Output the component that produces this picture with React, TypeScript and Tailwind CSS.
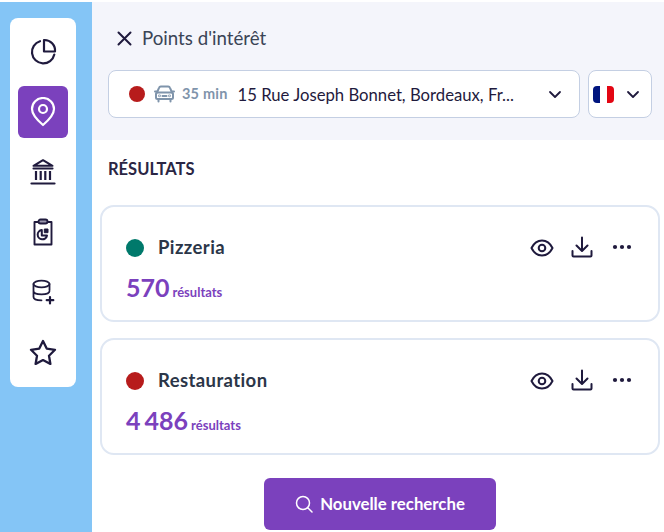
import React from "react";

const ink = "#1f1a3d";

function Nav({ active, children }: { active?: boolean; children: React.ReactNode }) {
  return (
    <div className={active ? "flex h-[52px] w-[50px] items-center justify-center rounded-[6px] bg-[#7b41bd] text-white" : "flex h-[52px] w-[50px] items-center justify-center text-[#1f1a3d]"}>
      {children}
    </div>
  );
}

function Chevron() {
  return (
    <svg width="14" height="9" viewBox="0 0 14 9" fill="none" stroke={ink} strokeWidth="1.800" strokeLinecap="round" strokeLinejoin="round">
      <path d="M2 2l5 5 5-5" />
    </svg>
  );
}

function Actions() {
  return (
    <div className="flex items-center text-[#1f1a3d]">
      <svg width="24" height="18" viewBox="0 0 24 18" fill="none" stroke="currentColor" strokeWidth="2" strokeLinejoin="round">
        <path d="M1.500 9C3.800 4.400 7.500 1.500 12 1.500S20.200 4.400 22.500 9c-2.300 4.600-6 7.500-10.500 7.500S3.800 13.600 1.500 9z" />
        <circle cx="12" cy="9" r="3.300" />
      </svg>
      <svg className="ml-[17px] -translate-y-px" width="22" height="22" viewBox="0 0 22 22" fill="none" stroke="currentColor" strokeWidth="2" strokeLinecap="round" strokeLinejoin="round">
        <path d="M11 1.500v13M5.500 9.500l5.500 5.500 5.500-5.500M1.500 15v4.500a1 1 0 0 0 1 1h17a1 1 0 0 0 1-1V15" />
      </svg>
      <svg className="ml-[19px] -translate-y-px" width="20" height="6" viewBox="0 0 20 6" fill="currentColor">
        <circle cx="3" cy="3" r="2.100" />
        <circle cx="10" cy="3" r="2.100" />
        <circle cx="17" cy="3" r="2.100" />
      </svg>
    </div>
  );
}

function Card({ color, name, count }: { color: string; name: string; count: string }) {
  return (
    <div className="h-[117px] w-[560px] rounded-[14px] border-2 border-[#dfe7f3] bg-white pl-[24px] pr-[26px] pt-[21px]">
      <div className="flex h-[40px] items-center justify-between">
        <div className="flex items-center">
          <span className="h-[18px] w-[18px] rounded-full" style={{ background: color }} />
          <span className="ml-[14px] text-[18.500px] font-bold tracking-[0.4px] text-[#2b3648]">{name}</span>
        </div>
        <Actions />
      </div>
      <div className="mt-[3px] flex items-baseline text-[#7b41bd]">
        <span className="text-[25px] font-bold leading-[32px] [word-spacing:-2px]">{count}</span>
        <span className="ml-[3px] text-[13px] font-bold">résultats</span>
      </div>
    </div>
  );
}

export default function App() {
  return (
    <div className="h-[532px] w-[664px] overflow-hidden bg-white pt-[2px] font-['Lato','Noto_Sans',sans-serif]">
      <div className="flex h-[530px] bg-[#84c5f6]">
        <div className="w-[92px] shrink-0 pl-[10px] pt-[16px]">
          <div className="flex h-[369px] w-[66px] flex-col items-center gap-[8px] rounded-[8px] bg-white pt-[8px]">
            <Nav>
              <svg width="28" height="28" viewBox="0 0 28 28" fill="none" stroke="currentColor" strokeWidth="2.200" strokeLinejoin="round" strokeLinecap="round">
                <path d="M11 3.200A11.300 11.300 0 1 0 25.300 16.500" />
                <path d="M15 2a10.500 10.500 0 0 1 11 11.500H15z" />
              </svg>
            </Nav>
            <Nav active>
              <svg width="26" height="30" viewBox="0 0 26 30" fill="none" stroke="currentColor" strokeWidth="2.200" strokeLinejoin="round">
                <path d="M13 28C6 22 2 17 2 12a11 11 0 0 1 22 0c0 5-4 10-11 16z" />
                <circle cx="13" cy="12" r="4" />
              </svg>
            </Nav>
            <Nav>
              <svg width="26" height="28" viewBox="0 0 26 28" fill="none" stroke="currentColor" strokeWidth="2.100" strokeLinecap="round" strokeLinejoin="round">
                <path d="M13 2.200L3.500 7.800h19z" />
                <path d="M3.500 10.500h19" />
                <path d="M6 13v9M10.700 13v9M15.300 13v9M20 13v9" strokeWidth="2.200" strokeLinecap="butt" />
                <path d="M1.500 25.500h23" strokeWidth="2.200" />
              </svg>
            </Nav>
            <Nav>
              <svg width="22" height="28" viewBox="0 0 22 28" fill="none" stroke="currentColor" strokeWidth="1.900" strokeLinejoin="round">
                <path d="M6 4H2.500v22.500h17V4H16" />
                <rect x="6.500" y="1.500" width="9" height="4" rx="2" fill="#9a97ad" />
                <path d="M9.800 12a4.700 4.700 0 1 0 5.200 5.500H9.800z" strokeWidth="2" fill="none" />
                <path d="M12.300 11h3.700v3.700h-3.700z" fill="currentColor" strokeWidth="1" />
              </svg>
            </Nav>
            <Nav>
              <svg width="24" height="26" viewBox="0 0 24 26" fill="none" stroke="currentColor" strokeWidth="1.800" strokeLinecap="round" strokeLinejoin="round">
                <ellipse cx="10.500" cy="5" rx="8" ry="3.300" />
                <path d="M2.500 5v13c0 2 3 3.300 8 3.300M18.500 5v6M2.500 12c0 2 3.500 3.300 8 3.300s8-1.300 8-3.300" />
                <path d="M19 18v6.500M15.700 21.200h6.600" strokeWidth="2.200" />
              </svg>
            </Nav>
            <Nav>
              <svg width="28" height="26" viewBox="0 0 28 26" fill="none" stroke="currentColor" strokeWidth="2.300" strokeLinejoin="round">
                <path d="M14 2l3.700 7.600 8.300 1.200-6 5.900 1.400 8.300-7.400-3.900-7.400 3.900L8 16.700l-6-5.900 8.300-1.200z" />
              </svg>
            </Nav>
          </div>
        </div>

        <div className="flex min-w-0 flex-1 flex-col bg-white">
          <div className="h-[138px] bg-[#f4f5fb] pl-[16px] pr-[68px] pt-[24px]">
            <div className="flex h-[24px] items-center">
              <svg className="ml-[9px]" width="15" height="15" viewBox="0 0 15 15" fill="none" stroke={ink} strokeWidth="2" strokeLinecap="round">
                <path d="M1.500 1.500l12 12M13.500 1.500l-12 12" />
              </svg>
              <span className="ml-[10px] text-[18.700px] text-[#3a4456]">Points d'intérêt</span>
            </div>
            <div className="mt-[20px] flex w-[580px] gap-[8px]">
              <div className="flex h-[48px] w-[472px] items-center rounded-[8px] border border-[#c4cfe3] bg-white pl-[20px] pr-[17px]">
                <span className="h-[16px] w-[16px] rounded-full bg-[#b71c1c]" />
                <svg className="ml-[9px]" width="21" height="18" viewBox="0 0 21 18" fill="none" stroke="#7f94ab" strokeWidth="2" strokeLinejoin="round" strokeLinecap="round">
                  <path d="M3 7.500L5 2.800A2 2 0 0 1 6.800 1.500h7.400A2 2 0 0 1 16 2.800l2 4.700" />
                  <path d="M1 6.500h2M18 6.500h2" />
                  <rect x="2" y="7.500" width="17" height="6.500" rx="1.500" />
                  <path d="M4.500 14v2.500M16.500 14v2.500M8.500 11h4" />
                  <circle cx="5.500" cy="10.800" r="0.400" />
                  <circle cx="15.500" cy="10.800" r="0.400" />
                </svg>
                <span className="ml-[7px] text-[14.500px] font-bold tracking-[0.2px] text-[#7f94ab]">35 min</span>
                <span className="ml-[10px] flex-1 translate-y-[2px] text-[16.700px] text-[#1f1a3d]">15 Rue Joseph Bonnet, Bordeaux, Fr...</span>
                <Chevron />
              </div>
              <div className="flex h-[48px] w-[64px] items-center rounded-[8px] border border-[#c4cfe3] bg-white pl-[4px]">
                <div className="flex h-[17px] w-[21px] overflow-hidden rounded-[4px]">
                  <span className="flex-1 bg-[#00157f]" />
                  <span className="flex-1 bg-white" />
                  <span className="flex-1 bg-[#e30613]" />
                </div>
                <span className="ml-[12px]"><Chevron /></span>
              </div>
            </div>
          </div>
          <div className="pl-[16px] pt-[18px] text-[16.500px] font-bold leading-[22px] text-[#2a2644]">RÉSULTATS</div>
          <div className="ml-[8px] mt-[25px] flex flex-col gap-[16px]">
            <Card color="#00796b" name="Pizzeria" count="570" />
            <Card color="#b71c1c" name="Restauration" count="4 486" />
          </div>
          <button className="ml-[172px] mt-[23px] flex h-[52px] w-[232px] shrink-0 items-center justify-center rounded-[6px] bg-[#7b41bd] text-[16.800px] font-bold text-white">
            <svg className="mr-[7px]" width="18" height="18" viewBox="0 0 18 18" fill="none" stroke="currentColor" strokeWidth="1.500" strokeLinecap="round">
              <circle cx="8" cy="8" r="6.500" />
              <path d="M13 13l4 4" />
            </svg>
            Nouvelle recherche
          </button>
        </div>
      </div>
    </div>
  );
}
